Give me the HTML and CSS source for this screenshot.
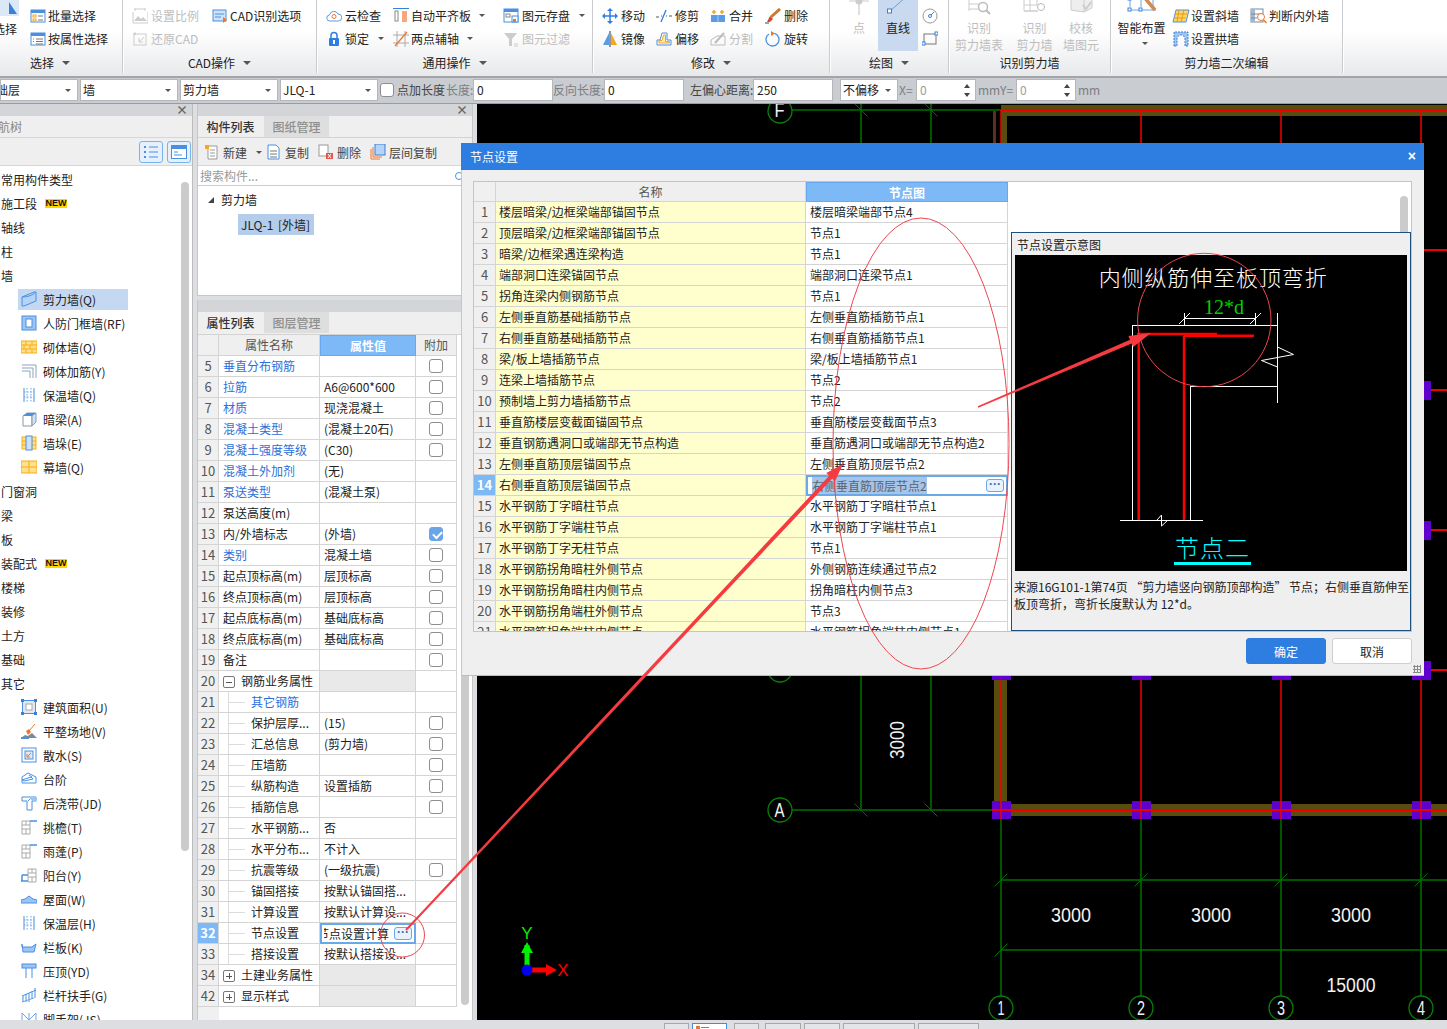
FILE: index.html
```html
<!DOCTYPE html>
<html lang="zh">
<head>
<meta charset="utf-8">
<title>节点设置</title>
<link rel="stylesheet" href="styles.css">
</head>
<body>
<svg class="sprite" xmlns="http://www.w3.org/2000/svg">
<symbol id="i-batch" viewBox="0 0 16 16"><rect x="1" y="2" width="14" height="12" fill="#fff" stroke="#4a90e2"/><rect x="1" y="2" width="14" height="3" fill="#4a90e2"/><rect x="3" y="7" width="3" height="2" fill="none" stroke="#f5a623"/><rect x="3" y="11" width="3" height="2" fill="none" stroke="#f5a623"/><path d="M8 8h5M8 12h5" stroke="#777"/></symbol>
<symbol id="i-attr" viewBox="0 0 16 16"><rect x="1" y="2" width="14" height="12" fill="#fff" stroke="#4a90e2"/><rect x="1" y="2" width="14" height="3" fill="#4a90e2"/><path d="M6 8h7M6 10.500h7M6 13h7" stroke="#777"/><path d="M3 8h1M3 10.500h1" stroke="#4a90e2"/></symbol>
<symbol id="i-scale" viewBox="0 0 16 16"><path d="M1 4v11h15V4" fill="none" stroke="#ccc"/><path d="M2 13l4-5 3 3 2-2 4 4z" fill="#ccc"/><path d="M3 1h10M3 0v3M13 0v3" stroke="#ccc"/></symbol>
<symbol id="i-cad" viewBox="0 0 16 16"><rect x="1" y="2" width="13" height="11" fill="#cfe2f8" stroke="#4a90e2"/><path d="M3 6h9M3 9h6" stroke="#4a90e2"/><path d="M11 9l4 3-4 3z" fill="#f0762a"/></symbol>
<symbol id="i-restore" viewBox="0 0 16 16"><rect x="2" y="3" width="12" height="11" fill="none" stroke="#ccc"/><path d="M12 6L7 11M7 7v4h4M1 3h3M3 1v3" fill="none" stroke="#ccc"/></symbol>
<symbol id="i-cloud" viewBox="0 0 16 16"><path d="M4 13a3 3 0 0 1-.5-6A4.500 4.500 0 0 1 12 6a3.500 3.500 0 0 1 .5 7z" fill="#fff" stroke="#5a9be4"/><circle cx="8" cy="8.500" r="2" fill="none" stroke="#f0762a"/></symbol>
<symbol id="i-lock" viewBox="0 0 16 16"><rect x="3" y="7" width="10" height="8" rx="1" fill="#2e7de1"/><path d="M5 7V4.500a3 3 0 0 1 6 0V7" fill="none" stroke="#2e7de1" stroke-width="1.500"/><rect x="7" y="9" width="2" height="4" fill="#fff"/></symbol>
<symbol id="i-align" viewBox="0 0 16 16"><path d="M0 .500h16" stroke="#3a80d8"/><rect x="2" y="3" width="3" height="10" fill="#fff" stroke="#888"/><rect x="9" y="3" width="5" height="11" fill="#f7a77b"/></symbol>
<symbol id="i-twopt" viewBox="0 0 16 16"><path d="M4 0v16M12 0v16M0 4h16M0 12h16" stroke="#aaa"/><path d="M2 15L14 1" stroke="#f0762a" stroke-width="1.300"/></symbol>
<symbol id="i-save" viewBox="0 0 16 16"><rect x="1" y="1" width="14" height="13" fill="#fff" stroke="#4a90e2"/><rect x="1" y="1" width="14" height="3" fill="#4a90e2"/><rect x="3" y="6" width="4" height="3" fill="none" stroke="#888"/><rect x="9" y="8" width="6" height="6" fill="#fff" stroke="#4a90e2"/><rect x="10" y="11" width="3" height="3" fill="#f0762a"/></symbol>
<symbol id="i-filter" viewBox="0 0 16 16"><path d="M1 2h13L9 8v7H6V8z" fill="#ccc"/><path d="M11 13h4M11 15h4" stroke="#ccc"/></symbol>
<symbol id="i-move" viewBox="0 0 16 16"><path d="M8 1v14M1 8h14" stroke="#2e7de1" stroke-width="1.500"/><path d="M8 0l3 3H5zM8 16l-3-3h6zM0 8l3-3v6zM16 8l-3 3V5z" fill="#2e7de1"/></symbol>
<symbol id="i-trim" viewBox="0 0 16 16"><path d="M0 9h3M5 8h1M10 8h1M13 8h3" stroke="#555"/><path d="M5 14l5-12" stroke="#2e7de1" stroke-width="1.300"/></symbol>
<symbol id="i-merge" viewBox="0 0 16 16"><rect x="1" y="7" width="14" height="7" fill="#5b9be6"/><path d="M8 7v7" stroke="#a9cdf5"/><path d="M4 2v4M2 4h4M12 2v4M10 4h4" stroke="#f5a623" stroke-width="1.500"/></symbol>
<symbol id="i-del" viewBox="0 0 16 16"><path d="M15 1L6 9" stroke="#c97b30" stroke-width="3"/><path d="M5 8l3 3-3 3H2z" fill="#d04a2a"/><path d="M0 15h4" stroke="#444"/></symbol>
<symbol id="i-mirror" viewBox="0 0 16 16"><path d="M1 14L7 2v12z" fill="#5b9be6"/><path d="M9 2l6 12H9z" fill="#f5a623"/><path d="M8 0v16" stroke="#333"/></symbol>
<symbol id="i-offset" viewBox="0 0 16 16"><path d="M1 14V9h3l2-7h5v7h4v5z" fill="#fff" stroke="#4a90e2"/><path d="M3 12V9.500h3L7.500 4h2v6.500h4V12z" fill="#ffe9b0" stroke="#f5a623"/></symbol>
<symbol id="i-split" viewBox="0 0 16 16"><path d="M1 14V9l6-4 8 0v9z" fill="none" stroke="#bbb"/><path d="M5 12L14 2" stroke="#bbb" stroke-width="2"/></symbol>
<symbol id="i-rotate" viewBox="0 0 16 16"><path d="M9.500 2.300A6.500 6.500 0 1 1 4 3" fill="none" stroke="#4a90e2" stroke-width="1.300"/><path d="M6 0l4 2.500-4 2.500z" fill="#f0762a"/></symbol>
<symbol id="i-point" viewBox="0 0 24 24"><path d="M2 6h20M12 6v14" stroke="#ccc" stroke-width="1.200"/><circle cx="12" cy="6" r="3.500" fill="#ccc"/></symbol>
<symbol id="i-line" viewBox="0 0 24 24"><path d="M4 16L20 2" stroke="#6c9fd8"/><rect x="1.500" y="14" width="4" height="4" fill="#fff" stroke="#3a80d8"/></symbol>
<symbol id="i-arc" viewBox="0 0 16 16"><circle cx="8" cy="8" r="7" fill="none" stroke="#999"/><circle cx="8" cy="8" r="1.500" fill="none" stroke="#3a80d8"/><path d="M9 7l3-3" stroke="#3a80d8"/></symbol>
<symbol id="i-rect" viewBox="0 0 16 16"><rect x="2" y="3" width="12" height="10" fill="none" stroke="#777"/><rect x="0" y="11" width="3" height="3" fill="#fff" stroke="#3a80d8"/><rect x="13" y="1" width="3" height="3" fill="#fff" stroke="#3a80d8"/></symbol>
<symbol id="i-rec1" viewBox="0 0 24 24"><path d="M2 4h14M2 9h10M2 14h10M2 -1v17M16 -1v6" fill="none" stroke="#ccc"/><circle cx="16" cy="12" r="4.500" fill="#fff" stroke="#bbb" stroke-width="1.500"/><path d="M19 15l4 4" stroke="#bbb" stroke-width="2"/></symbol>
<symbol id="i-rec2" viewBox="0 0 24 24"><path d="M1 4h22M1 10h14M1 16h14M7 4v6M14 4v6M7 10v6M1 -2v18h14" fill="none" stroke="#ccc"/><circle cx="18" cy="12" r="3.500" fill="#fff" stroke="#bbb"/></symbol>
<symbol id="i-check" viewBox="0 0 24 24"><path d="M2 3l13-3 8 2v11l-8 4-13-2z" fill="#eee" stroke="#ccc"/><path d="M15 0v17" stroke="#ccc"/><path d="M14 10l3 4 5-7" fill="none" stroke="#ccc" stroke-width="2"/></symbol>
<symbol id="i-smart" viewBox="0 0 30 24"><path d="M3 4h26M3 -4v16M14 -4v16M26 -4v16M3 15h26" stroke="#6ca6e6"/><rect x="1" y="2" width="3" height="3" fill="#fff" stroke="#3a80d8"/><rect x="1" y="13" width="3" height="3" fill="#fff" stroke="#3a80d8"/><rect x="12" y="13" width="3" height="3" fill="#fff" stroke="#3a80d8"/><path d="M17 2l11 13" stroke="#d08a55" stroke-width="3.500"/><path d="M16 -2v7M13 2h7" stroke="#f0762a"/></symbol>
<symbol id="i-slant" viewBox="0 0 18 16"><path d="M4 2h13l-3 12H1z" fill="#ffd667" stroke="#4a90e2"/><path d="M3 6h12M2.500 10h11M7 2L5 14M12 2l-3 12" stroke="#e89b12"/></symbol>
<symbol id="i-inout" viewBox="0 0 18 16"><rect x="1" y="1" width="12" height="13" fill="#fff" stroke="#708cac"/><rect x="1" y="1" width="4" height="13" fill="#a8b8cc"/><path d="M1 6h12M1 10h6" stroke="#708cac"/><circle cx="11" cy="9" r="3.500" fill="#fff" stroke="#f0762a"/><path d="M13.500 12l3 3" stroke="#f0762a" stroke-width="1.500"/></symbol>
<symbol id="i-arch" viewBox="0 0 16 16"><path d="M1 15V1h14v14h-3V8a4 4 0 0 0-8 0v7z" fill="#9dc4f2" stroke="#3a80d8" stroke-dasharray="2 1"/></symbol>
<symbol id="i-new" viewBox="0 0 16 16"><path d="M4 2h9v13H4z" fill="#fff" stroke="#999"/><path d="M6 6h5M6 9h5M6 12h5" stroke="#999"/><path d="M1 1h4v4H1z" fill="#f5a623"/></symbol>
<symbol id="i-copy" viewBox="0 0 16 16"><path d="M2 1h8l3 3v11H2z" fill="#fff" stroke="#4a90e2"/><path d="M4 7h7M4 10h7M4 13h7" stroke="#777"/></symbol>
<symbol id="i-delete" viewBox="0 0 16 16"><rect x="1" y="1" width="9" height="11" fill="#fff" stroke="#999"/><rect x="8" y="9" width="7" height="6" fill="#e2574c"/><path d="M10 10l3 4M13 10l-3 4" stroke="#fff"/></symbol>
<symbol id="i-layer" viewBox="0 0 16 16"><path d="M1 5v10h9" fill="none" stroke="#f0762a"/><path d="M3 3v10h9" fill="none" stroke="#f0762a"/><rect x="5" y="0" width="10" height="11" fill="#b5d3f7" stroke="#3a80d8"/></symbol>
<symbol id="i-listv" viewBox="0 0 16 16"><path d="M6 3h9M6 8h9M6 13h9" stroke="#4a90e2"/><path d="M1 3h2M1 8h2M1 13h2" stroke="#4a90e2" stroke-width="2"/></symbol>
<symbol id="i-cardv" viewBox="0 0 16 16"><rect x=".5" y="1.500" width="15" height="13" fill="#fff" stroke="#4a90e2"/><rect x="1" y="2" width="14" height="3" fill="#4a90e2"/><path d="M3 8h4M3 11h8" stroke="#4a90e2"/></symbol>
<symbol id="n-shear" viewBox="0 0 16 16"><path d="M1 6l12-5 2 0v9L3 15H1z" fill="#b5d3f7" stroke="#4a90e2"/><path d="M1 6c4 0 10-1 14-5" fill="none" stroke="#4a90e2"/></symbol>
<symbol id="n-rf" viewBox="0 0 16 16"><rect x="1" y="1" width="14" height="14" fill="#9dc4f2" stroke="#4a90e2"/><rect x="5" y="4" width="6" height="8" fill="#fff" stroke="#4a90e2"/></symbol>
<symbol id="n-brick" viewBox="0 0 16 16"><rect x="0" y="2" width="16" height="12" fill="#ffdf8c" stroke="#f5ae14"/><path d="M0 6h16M0 10h16M5 2v4M11 2v4M3 6v4M9 6v4M5 10v4M11 10v4" stroke="#f5ae14"/></symbol>
<symbol id="n-rebar" viewBox="0 0 16 16"><path d="M1 2h14v13M1 5h11v10M1 8h8v7" fill="none" stroke="#8aa3bc"/></symbol>
<symbol id="n-insul" viewBox="0 0 16 16"><path d="M3 1v14M13 1v14" stroke="#4a90e2"/><path d="M6 1v14M10 1v14M3 5h10M3 10h10" stroke="#6ca6e6" stroke-dasharray="1.500 1.500"/></symbol>
<symbol id="n-beam" viewBox="0 0 16 16"><path d="M2 5l4-3h9l-4 3v10H2z" fill="#fff" stroke="#8a98a8"/><path d="M11 5v10l4-4V2" fill="#cfe2f8" stroke="#8a98a8"/><path d="M6 2h9l-4 3H2z" fill="#4a90e2"/></symbol>
<symbol id="n-pier" viewBox="0 0 16 16"><rect x="1" y="2" width="14" height="12" fill="#ffdf8c" stroke="#f5ae14"/><path d="M1 6h14M1 10h14" stroke="#f5ae14"/><rect x="5" y="1" width="6" height="14" fill="#cfe2f8" stroke="#4a90e2"/></symbol>
<symbol id="n-curtain" viewBox="0 0 16 16"><rect x="0" y="2" width="16" height="12" fill="#ffdf8c" stroke="#f5ae14"/><path d="M0 8h16M8 2v12" stroke="#f5ae14"/></symbol>
<symbol id="n-area" viewBox="0 0 16 16"><rect x="1.500" y="1.500" width="13" height="13" fill="#dfe8f4" stroke="#4a90e2"/><rect x="5" y="5" width="6" height="6" fill="#fff" stroke="#aaa"/><path d="M0 0h3v3H0zM13 0h3v3h-3zM0 13h3v3H0zM13 13h3v3h-3z" fill="#3a80d8"/></symbol>
<symbol id="n-site" viewBox="0 0 16 16"><path d="M0 15l4-3 3 1 4-3 5 5z" fill="#7a8a99"/><path d="M0 15h8" stroke="#4a90e2" stroke-width="2"/><path d="M14 1L8 8" stroke="#f0762a"/><path d="M5 8l3-2 2 3-3 3z" fill="#f0762a"/></symbol>
<symbol id="n-apron" viewBox="0 0 16 16"><rect x="1" y="1" width="14" height="14" fill="#fff" stroke="#4a90e2"/><rect x="4" y="4" width="8" height="8" fill="#dfe8f4" stroke="#4a90e2"/><path d="M10 6L6.500 9.500M6 7v3h3" fill="none" stroke="#f0762a"/></symbol>
<symbol id="n-stair" viewBox="0 0 16 16"><path d="M1 6l6-4 8 4v6H1z" fill="#fff" stroke="#4a90e2"/><path d="M1 9l9-3 2 2-9 2zM8 4l3 2" fill="none" stroke="#4a90e2"/></symbol>
<symbol id="n-post" viewBox="0 0 16 16"><path d="M1 2h14v4h-4v9H6V6H1z" fill="#fff" stroke="#4a90e2"/><path d="M11 2L7 6" stroke="#4a90e2"/><path d="M8 2h7v4h-4z" fill="#9dc4f2"/></symbol>
<symbol id="n-eave" viewBox="0 0 16 16"><path d="M1 2h8v13H1zM1 6h8M1 10h8M5 2v4M5 10v5" fill="none" stroke="#aaa"/><path d="M9 2h7" stroke="#4a90e2" stroke-width="1.500"/></symbol>
<symbol id="n-balcony" viewBox="0 0 16 16"><path d="M7 2h8v13H7zM7 6h8M7 10h8M11 2v4M11 10v5" fill="none" stroke="#aaa"/><path d="M0 14h7M1 8h6M1 8v6" fill="none" stroke="#4a90e2" stroke-width="1.500"/></symbol>
<symbol id="n-roof" viewBox="0 0 16 16"><path d="M0 9l4-1 4-3 4 3 4 1v3H0z" fill="#9dc4f2" stroke="#4a90e2"/></symbol>
<symbol id="n-parapet" viewBox="0 0 16 16"><path d="M1 5l1 8h11l2-8-3 2-1 1H1z" fill="#9dc4f2" stroke="#4a90e2"/></symbol>
<symbol id="n-coping" viewBox="0 0 16 16"><rect x="1" y="1" width="14" height="4" fill="#9dc4f2" stroke="#4a90e2"/><path d="M5 5v10M11 5v10" stroke="#4a90e2"/></symbol>
<symbol id="n-rail" viewBox="0 0 16 16"><path d="M1 9l14-6" stroke="#4a90e2"/><path d="M2 15V9M5 15V7M8 15V6M11 12V4M14 11V1" stroke="#4a90e2"/><path d="M1 15l12-4" stroke="#6ca6e6"/></symbol>
<symbol id="n-scaf" viewBox="0 0 16 16"><path d="M1 2v14M8 2v14M15 2v14M1 2l7 7 7-7" fill="none" stroke="#6ca6e6"/></symbol>
</svg>

<div class="app">
  <header class="ribbon">
    <section class="grp g1">
      <div class="grp-body">
        <div class="big-sel">
          <svg class="big-sel-ic" viewBox="0 0 20 16"><rect width="20" height="16" fill="#dbe8f8"/><path d="M10 2v12h8z" fill="#3a80d8"/></svg>
          <span>选择</span>
        </div>
        <div class="col">
          <div class="rb gap2"><svg class="ic"><use href="#i-batch"/></svg>批量选择</div>
          <div class="rb gap2"><svg class="ic"><use href="#i-attr"/></svg>按属性选择</div>
        </div>
      </div>
      <div class="grp-label pl-sel">选择<i class="tri"></i></div>
    </section>
    <section class="grp g2">
      <div class="grp-body">
        <div class="col w80">
          <div class="rb off"><svg class="ic"><use href="#i-scale"/></svg>设置比例</div>
          <div class="rb off"><svg class="ic"><use href="#i-restore"/></svg>还原CAD</div>
        </div>
        <div class="col">
          <div class="rb gap2"><svg class="ic"><use href="#i-cad"/></svg>CAD识别选项</div>
        </div>
      </div>
      <div class="grp-label center">CAD操作<i class="tri"></i></div>
    </section>
    <section class="grp g3">
      <div class="grp-body">
        <div class="col w67">
          <div class="rb"><svg class="ic"><use href="#i-cloud"/></svg>云检查</div>
          <div class="rb"><svg class="ic"><use href="#i-lock"/></svg>锁定<i class="tri mini"></i></div>
        </div>
        <div class="col w110">
          <div class="rb gap2"><svg class="ic"><use href="#i-align"/></svg>自动平齐板<i class="tri mini"></i></div>
          <div class="rb gap2"><svg class="ic"><use href="#i-twopt"/></svg>两点辅轴<i class="tri mini"></i></div>
        </div>
        <div class="col">
          <div class="rb"><svg class="ic"><use href="#i-save"/></svg>图元存盘<i class="tri mini"></i></div>
          <div class="rb off"><svg class="ic"><use href="#i-filter"/></svg>图元过滤</div>
        </div>
      </div>
      <div class="grp-label center">通用操作<i class="tri"></i></div>
    </section>
    <section class="grp g4">
      <div class="grp-body">
        <div class="col w54">
          <div class="rb"><svg class="ic"><use href="#i-move"/></svg>移动</div>
          <div class="rb"><svg class="ic"><use href="#i-mirror"/></svg>镜像</div>
        </div>
        <div class="col w54">
          <div class="rb"><svg class="ic"><use href="#i-trim"/></svg>修剪</div>
          <div class="rb"><svg class="ic"><use href="#i-offset"/></svg>偏移</div>
        </div>
        <div class="col w55">
          <div class="rb"><svg class="ic"><use href="#i-merge"/></svg>合并</div>
          <div class="rb off"><svg class="ic"><use href="#i-split"/></svg>分割</div>
        </div>
        <div class="col">
          <div class="rb"><svg class="ic"><use href="#i-del"/></svg>删除</div>
          <div class="rb"><svg class="ic"><use href="#i-rotate"/></svg>旋转</div>
        </div>
      </div>
      <div class="grp-label center">修改<i class="tri"></i></div>
    </section>
    <section class="grp g5">
      <div class="grp-body">
        <div class="big w38 off"><div class="big-ic"><svg class="ic24"><use href="#i-point"/></svg></div><span>点</span></div>
        <div class="big w40 active"><div class="big-ic"><svg class="ic24"><use href="#i-line"/></svg></div><span>直线</span></div>
        <div class="col smalls">
          <div class="rb"></div>
          <div class="rb"><svg class="ic"><use href="#i-arc"/></svg></div>
          <div class="rb"><svg class="ic"><use href="#i-rect"/></svg></div>
        </div>
      </div>
      <div class="grp-label center">绘图<i class="tri"></i></div>
    </section>
    <section class="grp g6">
      <div class="grp-body">
        <div class="big w60 off"><div class="big-ic"><svg class="ic24"><use href="#i-rec1"/></svg></div><span>识别</span><span>剪力墙表</span></div>
        <div class="big w51 off"><div class="big-ic"><svg class="ic24"><use href="#i-rec2"/></svg></div><span>识别</span><span>剪力墙</span></div>
        <div class="big w42 off"><div class="big-ic"><svg class="ic24"><use href="#i-check"/></svg></div><span>校核</span><span>墙图元</span></div>
      </div>
      <div class="grp-label center">识别剪力墙</div>
    </section>
    <section class="grp g7">
      <div class="grp-body">
        <div class="big w61"><div class="big-ic"><svg class="ic30"><use href="#i-smart"/></svg></div><span>智能布置</span><i class="tri mini big-tri"></i></div>
        <div class="col w78">
          <div class="rb gap1"><svg class="ic18"><use href="#i-slant"/></svg>设置斜墙</div>
          <div class="rb gap1"><svg class="ic18"><use href="#i-arch"/></svg>设置拱墙</div>
        </div>
        <div class="col">
          <div class="rb gap1"><svg class="ic18"><use href="#i-inout"/></svg>判断内外墙</div>
        </div>
      </div>
      <div class="grp-label center">剪力墙二次编辑</div>
    </section>
  </header>

  <div class="optbar">
    <div class="sel s78"><span class="clip17">基础层</span><i class="tri"></i></div>
    <div class="sel s98">墙<i class="tri"></i></div>
    <div class="sel s98">剪力墙<i class="tri"></i></div>
    <div class="sel s98">JLQ-1<i class="tri"></i></div>
    <i class="cb cb-opt"></i>
    <span class="opt-t t-add">点加长度</span>
    <span class="opt-t dim t-len">长度:</span>
    <div class="inp i80">0</div>
    <span class="opt-t dim t-rev">反向长度:</span>
    <div class="inp i80">0</div>
    <span class="opt-t t-ecc">左偏心距离:</span>
    <div class="inp i80">250</div>
    <div class="sel s57">不偏移<i class="tri"></i></div>
    <span class="opt-t dim t-x">X=</span>
    <div class="inp i60 grayv">0<span class="spin"><i class="up"></i><i class="dn"></i></span></div>
    <span class="opt-t dim t-my">mmY=</span>
    <div class="inp i60 grayv">0<span class="spin"><i class="up"></i><i class="dn"></i></span></div>
    <span class="opt-t dim t-mm">mm</span>
  </div>

  <main class="main">
    <aside class="nav">
      <div class="pane-head">×</div>
      <div class="nav-title"><span class="clip14">导航树</span></div>
      <div class="nav-tools">
        <button class="vbtn"><svg class="ic"><use href="#i-listv"/></svg></button>
        <button class="vbtn"><svg class="ic"><use href="#i-cardv"/></svg></button>
      </div>
      <div class="nav-body">
        <ul class="tree">
          <li class="t0">常用构件类型</li>
          <li class="t0">施工段<b class="new">NEW</b></li>
          <li class="t0">轴线</li>
          <li class="t0">柱</li>
          <li class="t0">墙</li>
          <li class="t1 cur"><svg class="ic"><use href="#n-shear"/></svg>剪力墙(Q)</li>
          <li class="t1"><svg class="ic"><use href="#n-rf"/></svg>人防门框墙(RF)</li>
          <li class="t1"><svg class="ic"><use href="#n-brick"/></svg>砌体墙(Q)</li>
          <li class="t1"><svg class="ic"><use href="#n-rebar"/></svg>砌体加筋(Y)</li>
          <li class="t1"><svg class="ic"><use href="#n-insul"/></svg>保温墙(Q)</li>
          <li class="t1"><svg class="ic"><use href="#n-beam"/></svg>暗梁(A)</li>
          <li class="t1"><svg class="ic"><use href="#n-pier"/></svg>墙垛(E)</li>
          <li class="t1"><svg class="ic"><use href="#n-curtain"/></svg>幕墙(Q)</li>
          <li class="t0">门窗洞</li>
          <li class="t0">梁</li>
          <li class="t0">板</li>
          <li class="t0">装配式<b class="new">NEW</b></li>
          <li class="t0">楼梯</li>
          <li class="t0">装修</li>
          <li class="t0">土方</li>
          <li class="t0">基础</li>
          <li class="t0">其它</li>
          <li class="t1"><svg class="ic"><use href="#n-area"/></svg>建筑面积(U)</li>
          <li class="t1"><svg class="ic"><use href="#n-site"/></svg>平整场地(V)</li>
          <li class="t1"><svg class="ic"><use href="#n-apron"/></svg>散水(S)</li>
          <li class="t1"><svg class="ic"><use href="#n-stair"/></svg>台阶</li>
          <li class="t1"><svg class="ic"><use href="#n-post"/></svg>后浇带(JD)</li>
          <li class="t1"><svg class="ic"><use href="#n-eave"/></svg>挑檐(T)</li>
          <li class="t1"><svg class="ic"><use href="#n-eave"/></svg>雨蓬(P)</li>
          <li class="t1"><svg class="ic"><use href="#n-balcony"/></svg>阳台(Y)</li>
          <li class="t1"><svg class="ic"><use href="#n-roof"/></svg>屋面(W)</li>
          <li class="t1"><svg class="ic"><use href="#n-insul"/></svg>保温层(H)</li>
          <li class="t1"><svg class="ic"><use href="#n-parapet"/></svg>栏板(K)</li>
          <li class="t1"><svg class="ic"><use href="#n-coping"/></svg>压顶(YD)</li>
          <li class="t1"><svg class="ic"><use href="#n-rail"/></svg>栏杆扶手(G)</li>
          <li class="t1"><svg class="ic"><use href="#n-scaf"/></svg>脚手架(JS)</li>
        </ul>
        <div class="sb nav-sb"></div>
      </div>
    </aside>

    <div class="mid">
      <section class="pane comp">
        <div class="pane-head">×</div>
        <div class="tabs"><span class="tab on">构件列表</span><span class="tab">图纸管理</span></div>
        <div class="comp-tools">
          <span class="tb tb-new"><svg class="ic"><use href="#i-new"/></svg>新建<i class="tri mini"></i></span>
          <span class="tb tb-copy"><svg class="ic"><use href="#i-copy"/></svg>复制</span>
          <span class="tb tb-del"><svg class="ic"><use href="#i-delete"/></svg>删除</span>
          <span class="tb"><svg class="ic"><use href="#i-layer"/></svg>层间复制</span>
        </div>
        <div class="search">搜索构件...<i class="lens"></i></div>
        <div class="comp-tree">
          <div class="ct-root"><i class="ct-arrow"></i>剪力墙</div>
          <div class="ct-leaf"><span>JLQ-1 [外墙]</span></div>
        </div>
      </section>

      <section class="pane props">
        <div class="pane-head"></div>
        <div class="tabs"><span class="tab on">属性列表</span><span class="tab">图层管理</span></div>
        <div class="prop-body">
          <div class="prop-wrap">
            <table class="grid ptable">
              <colgroup><col class="c21"><col class="c101"><col class="c96"><col class="c41"></colgroup>
              <thead><tr><th class="idx"></th><th>属性名称</th><th class="hl">属性值</th><th>附加</th></tr></thead>
              <tbody>
                <tr><td class="idx">5</td><td class="lnk">垂直分布钢筋</td><td></td><td class="ac"><i class="cb"></i></td></tr>
                <tr><td class="idx">6</td><td class="lnk">拉筋</td><td>A6@600*600</td><td class="ac"><i class="cb"></i></td></tr>
                <tr><td class="idx">7</td><td class="lnk">材质</td><td>现浇混凝土</td><td class="ac"><i class="cb"></i></td></tr>
                <tr><td class="idx">8</td><td class="lnk">混凝土类型</td><td>(混凝土20石)</td><td class="ac"><i class="cb"></i></td></tr>
                <tr><td class="idx">9</td><td class="lnk">混凝土强度等级</td><td>(C30)</td><td class="ac"><i class="cb"></i></td></tr>
                <tr><td class="idx">10</td><td class="lnk">混凝土外加剂</td><td>(无)</td><td></td></tr>
                <tr><td class="idx">11</td><td class="lnk">泵送类型</td><td>(混凝土泵)</td><td></td></tr>
                <tr><td class="idx">12</td><td>泵送高度(m)</td><td></td><td></td></tr>
                <tr><td class="idx">13</td><td>内/外墙标志</td><td>(外墙)</td><td class="ac"><i class="cb on"></i></td></tr>
                <tr><td class="idx">14</td><td class="lnk">类别</td><td>混凝土墙</td><td class="ac"><i class="cb"></i></td></tr>
                <tr><td class="idx">15</td><td>起点顶标高(m)</td><td>层顶标高</td><td class="ac"><i class="cb"></i></td></tr>
                <tr><td class="idx">16</td><td>终点顶标高(m)</td><td>层顶标高</td><td class="ac"><i class="cb"></i></td></tr>
                <tr><td class="idx">17</td><td>起点底标高(m)</td><td>基础底标高</td><td class="ac"><i class="cb"></i></td></tr>
                <tr><td class="idx">18</td><td>终点底标高(m)</td><td>基础底标高</td><td class="ac"><i class="cb"></i></td></tr>
                <tr><td class="idx">19</td><td>备注</td><td></td><td class="ac"><i class="cb"></i></td></tr>
                <tr class="gr"><td class="idx">20</td><td><i class="pm minus"></i>钢筋业务属性</td><td></td><td></td></tr>
                <tr><td class="idx">21</td><td class="tl lnk">其它钢筋</td><td></td><td></td></tr>
                <tr><td class="idx">22</td><td class="tl">保护层厚...</td><td>(15)</td><td class="ac"><i class="cb"></i></td></tr>
                <tr><td class="idx">23</td><td class="tl">汇总信息</td><td>(剪力墙)</td><td class="ac"><i class="cb"></i></td></tr>
                <tr><td class="idx">24</td><td class="tl">压墙筋</td><td></td><td class="ac"><i class="cb"></i></td></tr>
                <tr><td class="idx">25</td><td class="tl">纵筋构造</td><td>设置插筋</td><td class="ac"><i class="cb"></i></td></tr>
                <tr><td class="idx">26</td><td class="tl">插筋信息</td><td></td><td class="ac"><i class="cb"></i></td></tr>
                <tr><td class="idx">27</td><td class="tl">水平钢筋...</td><td>否</td><td></td></tr>
                <tr><td class="idx">28</td><td class="tl">水平分布...</td><td>不计入</td><td></td></tr>
                <tr><td class="idx">29</td><td class="tl">抗震等级</td><td>(一级抗震)</td><td class="ac"><i class="cb"></i></td></tr>
                <tr><td class="idx">30</td><td class="tl">锚固搭接</td><td>按默认锚固搭...</td><td></td></tr>
                <tr><td class="idx">31</td><td class="tl">计算设置</td><td>按默认计算设...</td><td></td></tr>
                <tr><td class="idx cur">32</td><td class="tl">节点设置</td><td class="edit"><div class="editbox"><span class="cw"><span class="clip7">节点设置计算</span></span><i class="more">···</i></div></td><td></td></tr>
                <tr><td class="idx">33</td><td class="tl">搭接设置</td><td>按默认搭接设...</td><td></td></tr>
                <tr class="gr"><td class="idx">34</td><td><i class="pm"></i>土建业务属性</td><td></td><td></td></tr>
                <tr class="gr"><td class="idx">42</td><td><i class="pm"></i>显示样式</td><td></td><td></td></tr>
              </tbody>
            </table>
          </div>
          <div class="sb prop-sb"></div>
        </div>
      </section>
    </div>

    <div class="canvas">
      <svg class="cad" viewBox="477 104 970 916" xmlns="http://www.w3.org/2000/svg">
        <rect x="477" y="104" width="970" height="916" fill="#000"/>
        <g class="wall">
          <rect x="1001" y="105" width="446" height="11"/>
          <rect x="994" y="116" width="13" height="700"/>
          <rect x="994" y="804" width="453" height="12"/>
        </g>
        <rect x="996" y="111" width="5" height="32" fill="#000"/>
        <rect x="993" y="111" width="3" height="32" fill="#5a3020"/>
        <g class="gr-l">
          <path d="M791 110H1001M861 104V810M931 104V810M791 810H1001"/>
          <path d="M791 670H1001"/>
          <path d="M1001 810V996M1141 810V996M1281 810V996M1421 810V996"/>
          <path d="M1001 880H1447M1001 950H1447"/>
        </g>
        <g class="tick">
          <path d="M854.500 803.500l13 13M924.500 803.500l13 13M854.500 103.500l13 13M924.500 103.500l13 13"/>
          <path d="M994.500 886.500l13-13M1134.500 886.500l13-13M1274.500 886.500l13-13M1414.500 886.500l13-13M994.500 956.500l13-13"/>
        </g>
        <g class="gr-c">
          <circle cx="780" cy="111" r="12"/><circle cx="780" cy="810" r="12"/><circle cx="780" cy="670" r="12"/>
          <circle cx="1001" cy="1008" r="12"/><circle cx="1141" cy="1008" r="12"/><circle cx="1281" cy="1008" r="12"/><circle cx="1421" cy="1008" r="12"/>
        </g>
        <g class="red-v">
          <path d="M1001 110V810M1141 110V810M1281 110V810M1421 110V810"/>
        </g>
        <g class="red-h">
          <path d="M1001 110H1447M1001 250H1447M1001 390H1447M1001 530H1447M1001 670H1447M1001 810H1447"/>
        </g>
        <g class="col-p">
          <rect x="992" y="661" width="19" height="19"/><rect x="1132" y="661" width="19" height="19"/><rect x="1272" y="661" width="19" height="19"/><rect x="1412" y="661" width="19" height="19"/>
          <rect x="1412" y="381" width="19" height="19"/><rect x="1412" y="521" width="19" height="19"/>
          <rect x="992" y="801" width="19" height="18"/><rect x="1132" y="801" width="19" height="18"/><rect x="1272" y="801" width="19" height="18"/><rect x="1412" y="801" width="19" height="18"/>
        </g>
        <path class="red-h" d="M992 810H1447"/>
        <path class="red-v" d="M1001 801V819M1141 801V819M1281 801V819M1421 801V819"/>
        <g class="dim-t">
          <text x="779.500" y="117" textLength="10" lengthAdjust="spacingAndGlyphs">F</text>
          <text x="779.500" y="817" textLength="10" lengthAdjust="spacingAndGlyphs">A</text>
          <text x="1001" y="1015" textLength="7" lengthAdjust="spacingAndGlyphs">1</text>
          <text x="1141" y="1015" textLength="8" lengthAdjust="spacingAndGlyphs">2</text>
          <text x="1281" y="1015" textLength="8" lengthAdjust="spacingAndGlyphs">3</text>
          <text x="1421" y="1015" textLength="8" lengthAdjust="spacingAndGlyphs">4</text>
          <text x="1071" y="922" textLength="40" lengthAdjust="spacingAndGlyphs">3000</text>
          <text x="1211" y="922" textLength="40" lengthAdjust="spacingAndGlyphs">3000</text>
          <text x="1351" y="922" textLength="40" lengthAdjust="spacingAndGlyphs">3000</text>
          <text x="1351" y="992" textLength="49" lengthAdjust="spacingAndGlyphs">15000</text>
          <text transform="translate(904 740) rotate(-90)" textLength="38" lengthAdjust="spacingAndGlyphs">3000</text>
        </g>
        <g>
          <path d="M527 970V945" stroke="#00f000" stroke-width="5"/>
          <path d="M527 942l6 11h-12z" fill="#00f000"/>
          <path d="M527 970H548" stroke="#ff0000" stroke-width="5"/>
          <path d="M557 970l-11-6v12z" fill="#ff0000"/>
          <circle cx="527" cy="970" r="5.500" fill="#0000f0"/>
          <text class="ax-y" x="527" y="939">Y</text>
          <text class="ax-x" x="563" y="976">X</text>
        </g>
      </svg>
    </div>
  </main>

  <footer class="status">
    <i class="st w25"></i><i class="st w35 on"></i><i class="st w25 ml7"></i><i class="st w36 ml6"></i><i class="st w36"></i><i class="st w72"></i><i class="st w61"></i>
  </footer>
</div>

<div class="dialog">
  <div class="dlg-title"><span>节点设置</span><span class="dlg-x">×</span></div>
  <div class="dlg-main">
    <div class="dlg-table">
      <table class="grid dtable">
        <colgroup><col class="c22"><col class="c310"><col class="c202"></colgroup>
        <thead><tr><th class="idx"></th><th>名称</th><th class="hl">节点图</th></tr></thead>
        <tbody>
          <tr><td class="idx">1</td><td class="ye">楼层暗梁/边框梁端部锚固节点</td><td>楼层暗梁端部节点4</td></tr>
          <tr><td class="idx">2</td><td class="ye">顶层暗梁/边框梁端部锚固节点</td><td>节点1</td></tr>
          <tr><td class="idx">3</td><td class="ye">暗梁/边框梁遇连梁构造</td><td>节点1</td></tr>
          <tr><td class="idx">4</td><td class="ye">端部洞口连梁锚固节点</td><td>端部洞口连梁节点1</td></tr>
          <tr><td class="idx">5</td><td class="ye">拐角连梁内侧钢筋节点</td><td>节点1</td></tr>
          <tr><td class="idx">6</td><td class="ye">左侧垂直筋基础插筋节点</td><td>左侧垂直筋插筋节点1</td></tr>
          <tr><td class="idx">7</td><td class="ye">右侧垂直筋基础插筋节点</td><td>右侧垂直筋插筋节点1</td></tr>
          <tr><td class="idx">8</td><td class="ye">梁/板上墙插筋节点</td><td>梁/板上墙插筋节点1</td></tr>
          <tr><td class="idx">9</td><td class="ye">连梁上墙插筋节点</td><td>节点2</td></tr>
          <tr><td class="idx">10</td><td class="ye">预制墙上剪力墙插筋节点</td><td>节点2</td></tr>
          <tr><td class="idx">11</td><td class="ye">垂直筋楼层变截面锚固节点</td><td>垂直筋楼层变截面节点3</td></tr>
          <tr><td class="idx">12</td><td class="ye">垂直钢筋遇洞口或端部无节点构造</td><td>垂直筋遇洞口或端部无节点构造2</td></tr>
          <tr><td class="idx">13</td><td class="ye">左侧垂直筋顶层锚固节点</td><td>左侧垂直筋顶层节点2</td></tr>
          <tr><td class="idx cur">14</td><td class="ye">右侧垂直筋顶层锚固节点</td><td class="edit"><div class="editbox"><span class="picked">右侧垂直筋顶层节点2</span><i class="more">···</i></div></td></tr>
          <tr><td class="idx">15</td><td class="ye">水平钢筋丁字暗柱节点</td><td>水平钢筋丁字暗柱节点1</td></tr>
          <tr><td class="idx">16</td><td class="ye">水平钢筋丁字端柱节点</td><td>水平钢筋丁字端柱节点1</td></tr>
          <tr><td class="idx">17</td><td class="ye">水平钢筋丁字无柱节点</td><td>节点1</td></tr>
          <tr><td class="idx">18</td><td class="ye">水平钢筋拐角暗柱外侧节点</td><td>外侧钢筋连续通过节点2</td></tr>
          <tr><td class="idx">19</td><td class="ye">水平钢筋拐角暗柱内侧节点</td><td>拐角暗柱内侧节点3</td></tr>
          <tr><td class="idx">20</td><td class="ye">水平钢筋拐角端柱外侧节点</td><td>节点3</td></tr>
          <tr><td class="idx">21</td><td class="ye">水平钢筋拐角端柱内侧节点</td><td>水平钢筋拐角端柱内侧节点1</td></tr>
        </tbody>
      </table>
      <div class="dlg-right">
        <div class="dlg-top"><div class="sb dlg-sb"></div></div>
        <div class="preview">
          <div class="pv-title">节点设置示意图</div>
          <svg class="pv-img" viewBox="1015 255 392 316" xmlns="http://www.w3.org/2000/svg">
            <rect x="1015" y="255" width="392" height="316" fill="#000"/>
            <text class="pv-h" x="1212.700" y="286" textLength="228">内侧纵筋伸至板顶弯折</text>
            <text class="pv-d" x="1224" y="314">12*d</text>
            <g class="pv-w">
              <path d="M1184.500 318.500H1255.500M1184.500 313V325M1255.500 313V325M1179 324l11-11M1250 324l11-11"/>
              <path d="M1132.500 325.500H1277.500M1132.500 325V520M1277.500 313V403M1190.500 386.500H1277.500M1190.500 386V520M1120 520.500H1203"/>
              <path d="M1277.500 347l16 7.500-32 6 16 6.500M1156.500 520.500l5-5.500v11l6-5.500"/>
            </g>
            <g class="pv-r">
              <path d="M1138.700 334V520M1137 334H1217M1184 336V520M1184 335.700H1254"/>
            </g>
            <text class="pv-n" x="1212" y="557" textLength="74">节点二</text>
            <rect x="1174" y="562" width="77" height="3" fill="#00ffff"/>
          </svg>
          <p class="pv-text">来源16G101-1第74页 “剪力墙竖向钢筋顶部构造” 节点；右侧垂直筋伸至<br>板顶弯折，弯折长度默认为 12*d。</p>
        </div>
      </div>
    </div>
    <div class="dlg-foot">
      <button class="btn pri">确定</button>
      <button class="btn">取消</button>
      <i class="grip"></i>
    </div>
  </div>
</div>

<svg class="marks" viewBox="0 0 1447 1029" xmlns="http://www.w3.org/2000/svg">
  <ellipse cx="921" cy="443.500" rx="88" ry="225.500"/>
  <circle cx="1204.300" cy="320" r="66.700"/>
  <circle cx="402.500" cy="935" r="22"/>
  <polygon points="406.700,930.700 832.200,478.500 835,481.200 843,464 826.300,473 829.200,475.700 405.300,929.300"/>
  <polygon points="978.300,407.700 1131.600,343.400 1133.200,347.100 1151,333 1128.400,336.100 1130,339.800 977.700,406.300"/>
</svg>
</body>
</html>
```
FILE: styles.css
```css
* { box-sizing: border-box; }
html, body { margin: 0; padding: 0; }
body {
  width: 1447px; height: 1029px; overflow: hidden; position: relative;
  font-family: "Noto Sans CJK SC", "Liberation Sans", sans-serif;
  font-size: 12px; line-height: 17px; color: #222; background: #dcdee1;
}
.sprite { display: none; }
i { font-style: normal; }
.app { width: 1447px; height: 1029px; display: flex; flex-direction: column; }

/* ribbon */
.ribbon {
  height: 78px; flex: none; display: flex; align-items: flex-start; overflow: hidden;
  background: linear-gradient(#fff 0, #fff 32px, #e7e9eb 76px);
  border-bottom: 2px solid #a2a4a7;
}
.grp { height: 73px; flex: none; display: flex; flex-direction: column; border-right: 1px solid #c9cbce; box-shadow: 1px 0 0 #fff; }
.g1 { width: 123px; }
.g2 { width: 194px; padding-left: 9px; }
.g3 { width: 276px; padding-left: 9px; }
.g4 { width: 237px; padding-left: 9px; }
.g5 { width: 119px; padding-left: 10px; }
.g6 { width: 162px; }
.g7 { width: 232px; }
.grp-body { height: 52px; display: flex; align-items: flex-start; }
.grp-label { height: 21px; line-height: 21px; display: flex; align-items: center; gap: 8px; }
.grp-label.center { justify-content: center; }
.g2 .grp-label, .g3 .grp-label, .g4 .grp-label { margin-left: -9px; }
.g5 .grp-label { margin-left: -10px; }
.pl-sel { padding-left: 30px; }
.col { display: flex; flex-direction: column; padding-top: 4px; }
.w80 { width: 80px; } .w67 { width: 67px; } .w110 { width: 110px; }
.w54 { width: 54px; } .w55 { width: 55px; } .w78 { width: 78px; }
.rb { height: 23px; display: flex; align-items: center; gap: 3px; white-space: nowrap; }
.gap2 { gap: 2px; } .gap1 { gap: 1px; }
.off { color: #bdbdbd; }
.ic { width: 16px; height: 16px; flex: none; display: block; }
.ic18 { width: 18px; height: 16px; flex: none; display: block; }
.ic24 { width: 24px; height: 24px; display: block; flex: none; }
.ic30 { width: 30px; height: 24px; display: block; flex: none; }
.tri { display: inline-block; width: 0; height: 0; border-left: 4px solid transparent; border-right: 4px solid transparent; border-top: 4px solid #555; flex: none; }
.tri.mini { border-left-width: 3px; border-right-width: 3px; border-top-width: 3px; margin-left: 6px; }
.big-sel { width: 30px; height: 52px; overflow: hidden; display: flex; flex-direction: column; align-items: flex-end; padding-right: 13px; }
.big-sel-ic { width: 20px; height: 16px; flex: none; margin-right: -2px; display: block; }
.big-sel span { white-space: nowrap; margin-top: 4px; flex: none; width: 24px; }
.big { height: 52px; display: flex; flex-direction: column; align-items: center; white-space: nowrap; flex: none; }
.big-ic { height: 19px; overflow: hidden; display: flex; align-items: flex-end; flex: none; }
.w38 { width: 38px; } .w40 { width: 40px; margin-left: 0; } .w60 { width: 60px; } .w51 { width: 51px; } .w42 { width: 42px; } .w61 { width: 61px; }
.big.active { background: #c8d9f0; height: 51px; }
.big-tri { margin: 6px 0 0; }
.smalls { padding: 0 0 0 4px; }
.smalls .rb:first-child { height: 4px; }
.smalls .rb { height: 23px; }

/* options bar */
.optbar { height: 26px; flex: none; display: flex; align-items: flex-start; padding-top: 1px; background: #c9ccd1; border-bottom: 1px solid #9a9ca0; }
.sel { height: 22px; line-height: 20px; background: #fff; border: 1px solid #b4b6ba; padding-left: 2px; margin-right: 2px; display: flex; align-items: center; justify-content: space-between; padding-right: 6px; overflow: hidden; white-space: nowrap; flex: none; }
.sel .tri { border-left-width: 3.500px; border-right-width: 3.500px; border-top-width: 3.500px; }
.s78 { width: 78px; padding-left: 0; } .s98 { width: 98px; } .s57 { width: 58px; margin-left: 7px; margin-right: 1px; }
.clip17 { margin-left: -17px; }
.cb { display: inline-block; width: 14px; height: 14px; border: 1px solid #8e8e8e; border-radius: 3px; background: #fff; vertical-align: middle; flex: none; }
.cb.on { background: #6aa5e8; border-color: #6aa5e8; }
.cb.on::after { content: ""; display: block; width: 7px; height: 4px; border-left: 2px solid #fff; border-bottom: 2px solid #fff; transform: rotate(-45deg); margin: 2.500px 0 0 2.500px; }
.cb-opt { margin: 4px 3px 0 0; }
.opt-t { height: 22px; line-height: 22px; white-space: nowrap; color: #444; flex: none; }
.opt-t.dim { color: #7c7e82; }
.t-add { width: 49px; } .t-len { width: 27px; } .t-rev { width: 51px; margin-left: 0; }
.t-ecc { width: 63px; margin-left: 6px; } .t-x { width: 17px; } .t-my { width: 38px; margin-left: 2px; } .t-mm { margin-left: 2px; }
.inp { height: 22px; line-height: 20px; background: #fff; border: 1px solid #b4b6ba; padding: 0 3px; flex: none; display: flex; justify-content: space-between; align-items: center; }
.i80 { width: 80px; } .i60 { width: 60px; }
.grayv { color: #9c9c9c; }
.spin { display: flex; flex-direction: column; gap: 5px; margin-right: 2px; }
.spin .up { width: 0; height: 0; border: 3px solid transparent; border-top: 0; border-bottom: 4px solid #444; }
.spin .dn { width: 0; height: 0; border: 3px solid transparent; border-bottom: 0; border-top: 4px solid #444; }

/* main */
.main { height: 916px; flex: none; display: flex; background: #dcdee1; }
.pane-head { height: 12px; background: #d3d5d9; text-align: right; padding-right: 4px; font-size: 12px; line-height: 11px; color: #666; font-weight: 700; flex: none; }
.nav { width: 193px; flex: none; display: flex; flex-direction: column; border-right: 1px solid #bcbcbc; background: #fff; }
.nav-title { height: 22px; line-height: 22px; background: #efefef; color: #888; border-bottom: 1px solid #d6d6d6; overflow: hidden; white-space: nowrap; flex: none; }
.clip14 { display: inline-block; margin-left: -14px; }
.nav-tools { height: 28px; padding-top: 3px; padding-right: 1px; background: #efefef; display: flex; justify-content: flex-end; gap: 4px; border-bottom: 1px solid #d6d6d6; flex: none; }
.vbtn { width: 24px; height: 22px; padding: 2px 3px; border: 1px solid #78b4ee; border-radius: 3px; background: #e6f0fc; }
.nav-body { flex: 1; display: flex; min-height: 0; overflow: hidden; }
.tree { list-style: none; margin: 0; padding: 1px 0 0; flex: none; width: 181px; }
.tree li { height: 24px; display: flex; align-items: center; white-space: nowrap; flex: none; }
.t0 { padding-left: 1px; }
.t1 { padding-left: 21px; gap: 6px; }
.tree .cur { background: linear-gradient(#c5d8f1,#c5d8f1) 18px 2px / 110px 21px no-repeat; }
.new { margin-left: 8px; font-size: 9px; line-height: 9px; height: 9px; width: 22px; text-align: center; background: #ffd500; color: #111; font-weight: 700; font-family: "Liberation Sans", sans-serif; }
.sb { background: #cbcbcb; border-radius: 4px; width: 8px; flex: none; }
.nav-sb { height: 669px; margin-top: 16px; }

.mid { width: 276px; flex: none; margin-left: 4px; display: flex; flex-direction: column; gap: 4px; }
.pane { background: #fff; border-left: 1px solid #c6c6c6; border-right: 1px solid #c6c6c6; display: flex; flex-direction: column; }
.comp { height: 192px; border-bottom: 1px solid #c6c6c6; }
.props { height: 720px; }
.tabs { height: 22px; background: #efefef; display: flex; border-bottom: 1px solid #d3d3d3; flex: none; }
.props .tabs { height: 23px; }
.tab { width: 65px; height: 21px; line-height: 21px; text-align: center; background: #dedede; color: #8f8f8f; margin-right: 1px; font-weight: 500; }
.tab.on { background: #efefef; color: #333; }
.comp-tools { height: 28px; background: #efefef; display: flex; align-items: center; padding: 1px 0 0 6px; border-bottom: 1px solid #d6d6d6; flex: none; }
.tb { display: flex; align-items: center; gap: 3px; color: #444; white-space: nowrap; }
.tb-new { width: 62px; } .tb-copy { width: 52px; } .tb-del { width: 52px; }
.search { height: 20px; line-height: 19px; padding-left: 2px; color: #9a9a9a; border-bottom: 1px solid #ccc; display: flex; justify-content: space-between; align-items: center; flex: none; }
.lens { width: 8px; height: 8px; border: 1.500px solid #4a90e2; border-radius: 50%; margin-right: 9px; }
.comp-tree { flex: 1; padding-top: 4px; }
.ct-root { height: 20px; line-height: 20px; display: flex; align-items: center; padding-left: 23px; }
.ct-arrow { width: 0; height: 0; border-style: solid; border-width: 0 0 6px 6px; border-color: transparent transparent #444 transparent; margin-right: 7px; margin-left: -13px; }
.ct-leaf { padding-left: 40px; margin-top: 4px; }
.ct-leaf span { display: block; width: 76px; height: 21px; line-height: 21px; background: #b3cdea; padding-left: 3px; white-space: nowrap; word-spacing: 2px; }

.prop-body { flex: 1; display: flex; min-height: 0; background: linear-gradient(#f0f0f0,#f0f0f0) 0 0 / 21px 100% no-repeat; }
.prop-wrap { width: 263px; flex: none; }
.prop-sb { height: 649px; margin-top: 21px; }

.grid { table-layout: fixed; border-collapse: separate; border-spacing: 0; }
.grid th, .grid td { height: 21px; padding: 0 3px; border-right: 1px solid #d4d4d4; border-bottom: 1px solid #d4d4d4; overflow: hidden; white-space: nowrap; text-align: left; font-weight: 400; line-height: 20px; }
.grid th { background: #efefef; text-align: center; color: #555; }
.grid th.hl { background: #7db8f7; color: #fff; font-weight: 700; border: 1px solid #68a8ee; line-height: 17px; }
.grid .idx { background: #f0f0f0; text-align: center; padding: 0; color: #555; font-size: 13px; }
.grid .idx.cur { background: #7db8f7; color: #fff; font-weight: 700; }
.c21 { width: 21px; } .c101 { width: 101px; } .c96 { width: 96px; } .c41 { width: 41px; }
.c22 { width: 22px; } .c310 { width: 310px; } .c202 { width: 202px; }
.ptable { width: 259px; }
.ptable td:nth-child(2), .ptable td:nth-child(3) { padding-left: 4px; }
.dtable td:nth-child(3) { padding-left: 4px; }
.lnk { color: #2c6fd8; }
.grid td.ac { text-align: center; padding: 0; }
.ac .cb { display: block; margin: 0 auto; }
.grid td.tl { padding-left: 32px; background: linear-gradient(#dcdcdc,#dcdcdc) 9px 0 / 1px 100% no-repeat, linear-gradient(#dcdcdc,#dcdcdc) 9px 50% / 17px 1px no-repeat; }
.grid tr.gr td:nth-child(3) { background: #e9e9e9; }
.pm { display: inline-block; width: 12px; height: 12px; border: 1px solid #777; border-radius: 2px; margin: 0 6px 0 0; vertical-align: -2px; background: linear-gradient(#555,#555) 50% 50% / 6px 1px no-repeat, linear-gradient(#555,#555) 50% 50% / 1px 6px no-repeat; }
.pm.minus { background: linear-gradient(#555,#555) 50% 50% / 6px 1px no-repeat; }
.grid td.edit { padding: 0; border-right: 0; border-bottom: 0; }
.editbox { height: 21px; border: 2px solid #6aa9e8; background: #fff; display: flex; align-items: center; justify-content: space-between; padding: 0 2px; overflow: hidden; }
.cw { display: block; flex: 1; min-width: 0; overflow: hidden; white-space: nowrap; }
.clip7 { display: inline-block; margin-left: -7px; }
.more { width: 18px; height: 13px; line-height: 9px; text-align: center; border: 1px solid #6aa9e8; border-radius: 3px; background: #eaf3fd; color: #3a6fb0; font-family: "Liberation Sans", sans-serif; font-size: 12px; font-weight: 700; flex: none; }
.picked { background: #a6c3e8; color: #5a6470; margin-left: 2px; }

.canvas { flex: 1; margin-left: 4px; min-width: 0; overflow: hidden; }
.cad { display: block; width: 970px; height: 916px; }
.wall rect { fill: #584c0e; }
.gr-l path { fill: none; stroke: #007000; stroke-width: 1.500; }
.tick path { fill: none; stroke: #007000; stroke-width: 1; }
.gr-c circle { fill: #000; stroke: #0a7d0a; stroke-width: 1.300; }
.red-v path, path.red-v { fill: none; stroke: #ee0000; stroke-width: 1.500; }
.red-h path, path.red-h { fill: none; stroke: #ee0000; stroke-width: 2; }
.col-p rect { fill: #6000cc; }
.dim-t text { font-family: "Liberation Sans", sans-serif; font-size: 20px; fill: #f2f2f2; text-anchor: middle; }
.ax-y { font-family: "Liberation Sans", sans-serif; font-size: 17px; fill: #00f000; text-anchor: middle; }
.ax-x { font-family: "Liberation Sans", sans-serif; font-size: 17px; fill: #ff0000; text-anchor: middle; }

.status { height: 9px; flex: none; background: #dcdee1; display: flex; padding: 3px 0 0 664px; gap: 3px; overflow: hidden; }
.st { display: block; height: 14px; background: #e4e5e8; border: 1px solid #a8a8a8; flex: none; }
.st.on { background: linear-gradient(#f0762a,#f0762a) 3px 2px / 4px 4px no-repeat, linear-gradient(#3a8ee6,#3a8ee6) 8px 3px / 8px 1px no-repeat, #fff; border-color: #3a8ee6; }
.w25 { width: 25px; } .w35 { width: 35px; } .w36 { width: 36px; } .w72 { width: 72px; } .w61 { width: 61px; }
.ml7 { margin-left: 4px; } .ml6 { margin-left: 3px; }

/* dialog */
.dialog { position: absolute; left: 461px; top: 143px; width: 963px; height: 533px; background: #efefef; display: flex; flex-direction: column; border-bottom: 1px solid #bdbdbd; }
.dlg-title { height: 27px; background: #2e7de1; color: #fff; display: flex; justify-content: space-between; align-items: center; padding: 0 8px 1px 9px; flex: none; }
.dlg-x { font-size: 14px; font-weight: 700; font-family: "Liberation Sans", sans-serif; }
.dlg-main { flex: 1; padding: 11px 12px 0; display: flex; flex-direction: column; border-left: 1px solid #c6c6c6; min-height: 0; }
.dlg-table { height: 451px; flex: none; background: #fff; border: 1px solid #c4c4c4; display: flex; overflow: hidden; width: 939px; margin-left: -1px; }
.dtable { width: 534px; flex: none; align-self: flex-start; }
.dtable thead th { height: 20px; line-height: 19px; }
.dtable thead th.hl { line-height: 17px; }
.grid td.ye { background: #ffffcd; padding-left: 3px; }
.dlg-right { flex: 1; display: flex; flex-direction: column; padding-left: 3px; min-width: 0; }
.dlg-top { height: 50px; flex: none; display: flex; justify-content: flex-end; align-items: flex-end; padding-right: 3px; }
.dlg-sb { height: 36px; border-radius: 4px 4px 0 0; }
.preview { width: 400px; flex: 1; background: #efefef; border: 1px solid #1d4f80; padding: 0 3px; min-height: 0; }
.pv-title { height: 22px; line-height: 24px; padding-left: 2px; white-space: nowrap; }
.pv-img { display: block; width: 392px; height: 316px; }
.pv-h { font-size: 22px; fill: #fff; text-anchor: middle; font-weight: 300; }
.pv-d { font-family: "Liberation Serif", serif; font-size: 20px; fill: #00d000; text-anchor: middle; }
.pv-n { font-size: 24px; fill: #00ffff; text-anchor: middle; font-weight: 300; }
.pv-w path { fill: none; stroke: #fff; stroke-width: 1; }
.pv-r path { fill: none; stroke: #ff0000; stroke-width: 2.500; }
.pv-text { margin: 7px -3px 0 -1px; line-height: 17px; white-space: nowrap; }
.dlg-foot { height: 43px; display: flex; justify-content: flex-end; align-items: flex-start; gap: 6px; padding-top: 6px; position: relative; flex: none; }
.btn { width: 80px; height: 26px; font: inherit; color: #222; background: #fff; border: 1px solid #cfcfcf; border-radius: 3px; padding: 0; margin: 0; }
.btn.pri { background: #2e7de1; border-color: #2e7de1; color: #fff; }
.grip { position: absolute; right: -9px; bottom: 2px; width: 8px; height: 8px; background: radial-gradient(circle, #8a8a8a 0 1px, transparent 1.200px) 0 0 / 3px 3px; }

/* annotations drawn on top of the screenshot */
.marks { position: absolute; left: 0; top: 0; width: 1447px; height: 1029px; pointer-events: none; }
.marks ellipse, .marks circle { fill: none; stroke: #ef4550; stroke-width: 1; }
.marks polygon { fill: #f53b3f; }
```
